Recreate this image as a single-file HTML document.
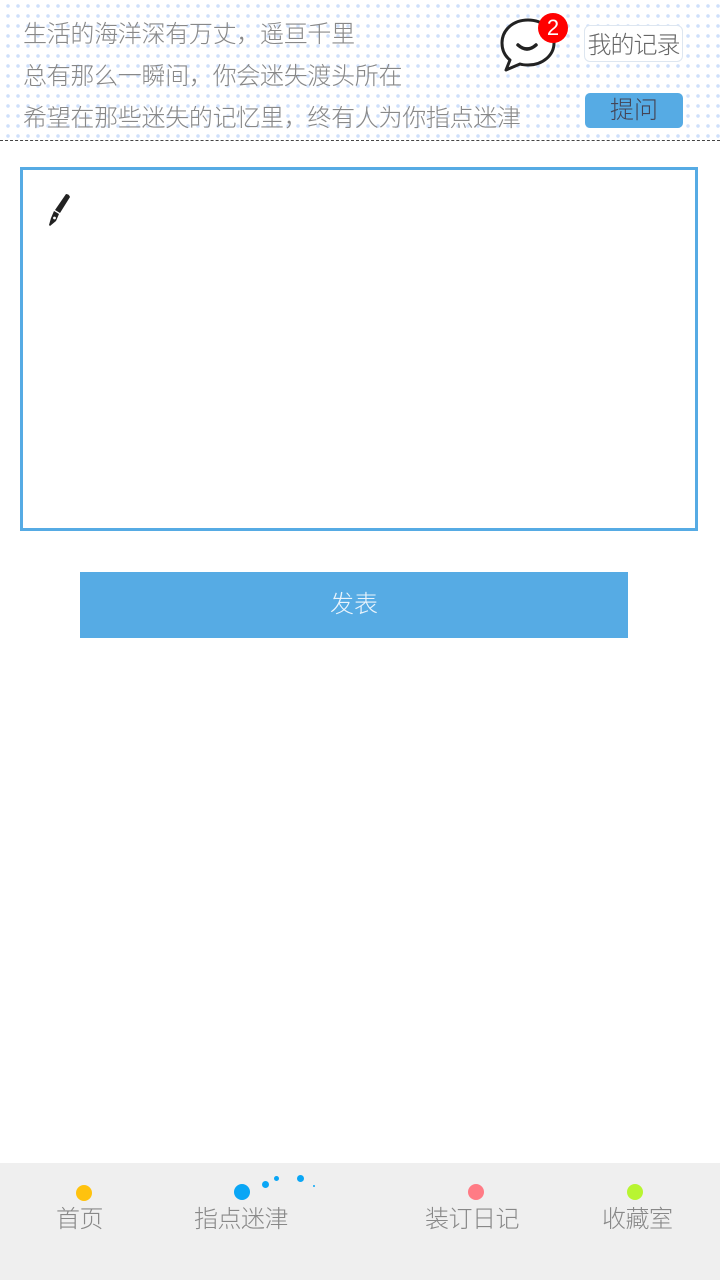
<!DOCTYPE html>
<html><head><meta charset="utf-8">
<style>
*{margin:0;padding:0;box-sizing:border-box}
body{width:720px;height:1280px;background:#fff;position:relative;overflow:hidden;font-family:"Liberation Sans","Noto Sans CJK SC",sans-serif;font-weight:300}
.hdr{position:absolute;left:0;top:0;width:720px;height:141px;background-color:#fff;background-image:radial-gradient(circle,#cfe0fb 1.6px,transparent 2px);background-size:10px 10px;background-position:3px 1px;border-bottom:1px dashed #444}
.hdr p{position:absolute;left:23px;font-size:24px;line-height:30px;color:#888;white-space:nowrap;letter-spacing:-0.3px}
.btn1{position:absolute;left:584px;top:25px;width:99px;height:37px;border:1px solid #dde6f0;border-radius:6px;background:#fff;font-size:24px;color:#666;text-align:center;line-height:39px;letter-spacing:-1px}
.btn2{position:absolute;left:585px;top:93px;width:98px;height:35px;border-radius:5px;background:#56abe4;font-size:24px;color:#445;text-align:center;line-height:35px}
.badge{position:absolute;left:538px;top:13px;width:30px;height:30px;border-radius:50%;background:#f00;color:#fff;font-size:22px;text-align:center;line-height:30px}
.box{position:absolute;left:20px;top:167px;width:678px;height:364px;border:3px solid #56abe4}
.send{position:absolute;left:80px;top:572px;width:548px;height:66px;background:#56abe4;color:#eaf4fc;font-size:24px;text-align:center;line-height:66px}
.tab{position:absolute;left:0;top:1163px;width:720px;height:117px;background:#efefef}
.t{position:absolute;top:1205px;font-size:24px;line-height:30px;color:#888;white-space:nowrap;letter-spacing:-0.5px}
.d{position:absolute;border-radius:50%}
</style></head><body>
<div class="hdr">
<p style="top:20px">生活的海洋深有万丈，遥亘千里</p>
<p style="top:62px">总有那么一瞬间，你会迷失渡头所在</p>
<p style="top:104px">希望在那些迷失的记忆里，终有人为你指点迷津</p>
<svg style="position:absolute;left:496px;top:16px" width="64" height="60" viewBox="0 0 64 60"><path d="M32 4 C17 4 6 14 6 27 C6 34 9 40 14 44 L10 54 L24 48 C27 49 29 49 32 49 C47 49 58 39 58 27 C58 14 47 4 32 4 Z" fill="#fff" stroke="#222" stroke-width="3" stroke-linejoin="round"/><path d="M22 29 Q31 37 40 29" fill="none" stroke="#222" stroke-width="3.5" stroke-linecap="round"/></svg>
<div class="badge">2</div>
<div class="btn1">我的记录</div>
<div class="btn2">提问</div>
</div>
<div class="box">
<svg style="position:absolute;left:22px;top:22px" width="28" height="36" viewBox="0 0 28 36"><path d="M21 2 Q24 2 25 5 L15 21 L10 18 Z" fill="#222"/><path d="M9 19 L14 22 L11 29 L5 34 L4 33 L6 26 Z" fill="#222"/><circle cx="9.5" cy="26" r="1.4" fill="#fff"/></svg>
</div>
<div class="send">发表</div>
<div class="tab"></div>
<div class="d" style="left:76px;top:1185px;width:16px;height:16px;background:#ffc20e"></div>
<div class="d" style="left:234px;top:1184px;width:16px;height:16px;background:#0aa6f5"></div>
<div class="d" style="left:262px;top:1181px;width:7px;height:7px;background:#0aa6f5"></div>
<div class="d" style="left:274px;top:1176px;width:5px;height:5px;background:#0aa6f5"></div>
<div class="d" style="left:297px;top:1175px;width:7px;height:7px;background:#0aa6f5"></div>
<div class="d" style="left:313px;top:1185px;width:2px;height:2px;background:#0aa6f5"></div>
<div class="d" style="left:468px;top:1184px;width:16px;height:16px;background:#ff7b85"></div>
<div class="d" style="left:627px;top:1184px;width:16px;height:16px;background:#b8f531"></div>
<div class="t" style="left:56px">首页</div>
<div class="t" style="left:194px">指点迷津</div>
<div class="t" style="left:425px">装订日记</div>
<div class="t" style="left:602px">收藏室</div>
</body></html>
